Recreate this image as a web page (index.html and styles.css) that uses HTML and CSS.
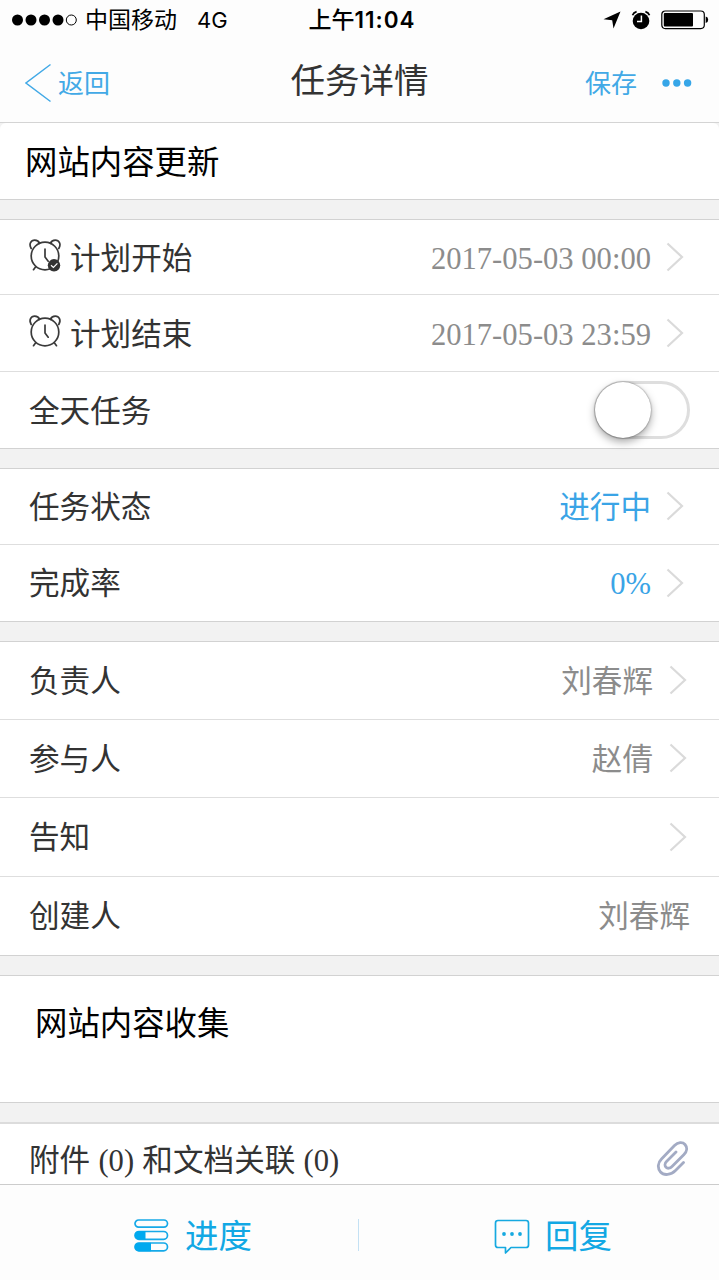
FILE: index.html
```html
<!DOCTYPE html>
<html lang="zh-CN">
<head>
<meta charset="utf-8">
<title>任务详情</title>
<link rel="stylesheet" href="styles.css">
</head>
<body>
<svg width="0" height="0" class="defs">
  <symbol id="chevron" viewBox="0 0 18 30"><path d="M1.500 1.500 16 15 1.500 28.500" fill="none" stroke="#dadada" stroke-width="2.200"/></symbol>
  <symbol id="clock" viewBox="0 0 34 34"><g fill="none" stroke="#3a3a3a" stroke-width="1.700" stroke-linecap="round"><circle cx="17" cy="18" r="13.800"/><path d="M3.200 10.500C.5 6 3 2.200 6.700 2.200c2.400 0 4.200 1.500 4.800 3.200M30.800 10.500C33.500 6 31 2.200 27.300 2.200c-2.400 0-4.200 1.500-4.800 3.200M7.500 29l-2 2.700M26.500 29l2 2.700M17 11v8l3.200 4.200"/></g></symbol>
</svg>
<div class="screen">
  <header class="top">
    <div class="status">
      <div class="carrier">
        <svg width="66" height="12" viewBox="0 0 66 12"><circle cx="6.500" cy="6" r="5.500"/><circle cx="20" cy="6" r="5.500"/><circle cx="33.500" cy="6" r="5.500"/><circle cx="47" cy="6" r="5.500"/><circle cx="60.300" cy="6" r="5" fill="none" stroke="#000"/></svg>
        <span class="operator">中国移动</span><span class="network">4G</span>
      </div>
      <div class="time">上午<b>11:04</b></div>
      <div class="indicators">
        <svg width="18" height="18" viewBox="0 0 18 18"><path d="M17.500.5 10.500 17.500 9.200 9.200.5 8.300Z"/></svg>
        <svg width="20" height="20" viewBox="0 0 20 20"><circle cx="10" cy="11" r="8.300"/><path d="M1.500 5.300Q2.500 2.500 5.600 1.600M18.500 5.300Q17.500 2.500 14.400 1.600" fill="none" stroke="#000" stroke-width="1.700"/><path d="M10.400 5.500v6H6" fill="none" stroke="#fff" stroke-width="1.500"/></svg>
        <svg width="48" height="20" viewBox="0 0 48 20"><rect x=".8" y="1" width="42.500" height="17.600" rx="3.500" fill="none" stroke="#000" stroke-width="1.200"/><rect x="2.800" y="3" width="29.200" height="13.600" rx="1"/><path d="M44.700 6.500q2.500.6 2.500 3.300t-2.500 3.300Z"/></svg>
      </div>
    </div>
    <nav class="nav">
      <div class="back"><svg width="28" height="40" viewBox="0 0 28 40"><path d="M25.500 1.500 1 20 25.500 38.500" fill="none" stroke="#42a9e6" stroke-width="1.500"/></svg><span>返回</span></div>
      <h1 class="heading">任务详情</h1>
      <div class="actions"><span>保存</span><svg width="30" height="8" viewBox="0 0 30 8" fill="#36a6e8"><circle cx="4" cy="4" r="3.700"/><circle cx="14.800" cy="4" r="3.700"/><circle cx="25.600" cy="4" r="3.700"/></svg></div>
    </nav>
  </header>
  <main class="content">
    <section class="task-title">网站内容更新</section>
    <section class="group schedule">
      <div class="row"><svg class="clock" width="34" height="34"><use href="#clock"/><circle cx="26" cy="27.300" r="6.200" fill="#333"/><path d="m23 27.200 2.400 2.200 4-4" fill="none" stroke="#fff" stroke-width="1.200"/></svg><span class="label">计划开始</span><span class="value">2017-05-03 00:00</span><svg class="chevron" width="18" height="30"><use href="#chevron"/></svg></div>
      <div class="row"><svg class="clock" width="34" height="34"><use href="#clock"/></svg><span class="label">计划结束</span><span class="value">2017-05-03 23:59</span><svg class="chevron" width="18" height="30"><use href="#chevron"/></svg></div>
      <div class="row"><span class="label">全天任务</span><span class="switch"><span class="knob"></span></span></div>
    </section>
    <section class="group state">
      <div class="row"><span class="label">任务状态</span><span class="value blue">进行中</span><svg class="chevron" width="18" height="30"><use href="#chevron"/></svg></div>
      <div class="row"><span class="label">完成率</span><span class="value blue">0%</span><svg class="chevron" width="18" height="30"><use href="#chevron"/></svg></div>
    </section>
    <section class="group people">
      <div class="row"><span class="label">负责人</span><span class="value">刘春辉</span><svg class="chevron" width="18" height="30"><use href="#chevron"/></svg></div>
      <div class="row"><span class="label">参与人</span><span class="value">赵倩</span><svg class="chevron" width="18" height="30"><use href="#chevron"/></svg></div>
      <div class="row"><span class="label">告知</span><svg class="chevron" width="18" height="30"><use href="#chevron"/></svg></div>
      <div class="row"><span class="label">创建人</span><span class="value">刘春辉</span></div>
    </section>
    <section class="group note">网站内容收集</section>
    <section class="attachments">
      <span class="label">附件 (0) 和文档关联 (0)</span>
      <svg width="32" height="36" viewBox="0 0 32 36"><path d="M27.500 22.500 19.500 30.500C15 35 8 36 4.500 32 1 28 2 22.500 5.500 19L18.500 5.500C22 2 26.500 1.500 29 4.500s2 7-1 10L16 26.500c-2 2-4.500 2.300-6 .8s-1.200-4 .5-5.700L20 12" fill="none" stroke="#a3abc4" stroke-width="2.800" stroke-linecap="round"/></svg>
    </section>
  </main>
  <footer class="toolbar">
    <div class="tool"><svg width="35" height="33" viewBox="0 0 35 33"><g fill="none" stroke="#16a9e8" stroke-width="1.700"><rect x="1" y="1" width="32.500" height="7.200" rx="3.600"/><rect x="1" y="12.500" width="32.500" height="7.800" rx="3.900"/><rect x="1" y="24" width="32.500" height="7.800" rx="3.900"/></g><path d="M5 12h6.500v8.500H5a4.250 4.250 0 0 1 0-8.500M5 23.700h12v8.500H5a4.250 4.250 0 0 1 0-8.500" fill="#00a9ef"/></svg><span>进度</span></div>
    <div class="tool reply"><svg width="36" height="36" viewBox="0 0 36 36"><path d="M4 1.500h28q2.500 0 2.500 2.500v22q0 2.500-2.500 2.500H17L11.500 34v-5.500H4Q1.500 28.500 1.500 26V4Q1.500 1.500 4 1.500Z" fill="none" stroke="#16a9e0" stroke-width="1.700" stroke-linejoin="round"/><g fill="#16a9e0"><circle cx="10" cy="15" r="1.900"/><circle cx="18" cy="15" r="1.900"/><circle cx="26" cy="15" r="1.900"/></g></svg><span>回复</span></div>
  </footer>
</div>
</body>
</html>
```
FILE: styles.css
```css
* { box-sizing: border-box; }
body { margin: 0; background: #f2f2f2; }
svg { display: block; flex: none; }
.defs { position: absolute; }
.screen {
  width: 719px; height: 1280px; overflow: hidden;
  display: flex; flex-direction: column;
  font: 30.6px/40px "Liberation Serif", "Noto Sans CJK SC", serif;
  color: #333;
}
.top { height: 123px; flex: none; background: #fdfdfd; border-bottom: 1px solid #d4d4d4; }
.status {
  height: 40px; padding: 0 10px 0 11px;
  display: grid; grid-template-columns: 1fr auto 1fr; align-items: center;
  font-family: Inter, "Noto Sans CJK SC", sans-serif; font-size: 23px; color: #000;
}
.carrier { display: flex; align-items: center; }
.operator { margin-left: 8px; }
.network { margin-left: 20px; font-size: 22px; }
.time { font-weight: 500; padding-left: 4px; }
.time b { font-weight: 600; font-size: 22.500px; letter-spacing: 1px; }
.indicators { display: flex; justify-content: flex-end; align-items: center; gap: 10px; }
.nav {
  height: 82px; padding: 4px 27px 0 25px;
  display: grid; grid-template-columns: 1fr auto 1fr; align-items: center;
}
.back, .actions { display: flex; align-items: center; color: #42a9e6; font-size: 26px; }
.back { gap: 5px; }
.back span, .actions span { padding-top: 3px; }
.actions { justify-content: flex-end; gap: 25px; }
.heading { margin: -5px 0 0 2px; font-size: 34.500px; font-weight: 400; }
.content { flex: 1; min-height: 0; display: flex; flex-direction: column; gap: 19px; }
.task-title {
  height: 77px; flex: none; padding: 4px 25px 0; background: #fff; color: #000;
  border-bottom: 1px solid #d2d2d2; border-radius: 6px 6px 0 0;
  font-size: 32.400px; display: flex; align-items: center;
}
.group { flex: none; background: #fff; border: solid #d2d2d2; border-width: 1px 0; display: grid; }
.schedule { height: 230px; grid-template-rows: 75px 77px 76px; }
.state { height: 154px; grid-template-rows: 76px 76px; }
.people { height: 315px; grid-template-rows: 78px 78px 79px 78px; }
.row { display: flex; align-items: center; padding: 0 29px; border-bottom: 1px solid #dedede; }
.row:last-child { border-bottom: 0; }
.clock { margin: -4px 8px 0 -1px; }
.label { flex: 1; }
.row .label, .value { padding-top: 3px; }
.people .row .label, .people .value, .state .row .label, .state .value { padding-top: 2px; }
.value { color: #8c8c8c; }
.blue { color: #3aa4e6; }
.chevron { margin: -1px 6px 0 15px; }
.people .chevron { margin: -1px 3px 0 16px; }
.switch {
  width: 96px; height: 58px; padding: 1px; border: 3px solid #dedede; border-radius: 29px;
}
.knob {
  display: block; width: 56px; height: 56px; margin: -3px 0 0 -3px; border-radius: 50%;
  background: #fff; box-shadow: 0 4px 8px rgba(0,0,0,.35), 0 0 2px rgba(0,0,0,.5);
}
.note { height: 128px; padding: 28px 35px; color: #000; font-size: 32.400px; }
.attachments {
  height: 63px; flex: none; display: flex; align-items: center; padding: 10px 31px 0 29px;
  background: #fff; border-top: 2px solid #dcdcdc;
}
.attachments .label { padding-top: 3px; word-spacing: .6px; }
.attachments svg { margin-top: -3px; }
.toolbar {
  height: 96px; flex: none; padding-top: 5px; background: #fdfdfd; border-top: 1px solid #ccc;
  display: grid; grid-template-columns: 359px 1fr; align-items: center;
  color: #12a8e4; font-size: 33.500px;
}
.tool { height: 32px; display: flex; align-items: center; padding-left: 134px; gap: 16px; border-right: 1px solid #c4e1f4; }
.tool span { padding-top: 3px; }
.reply { padding-left: 135px; gap: 15px; border: 0; }
.reply svg { margin-top: 4px; }
```
